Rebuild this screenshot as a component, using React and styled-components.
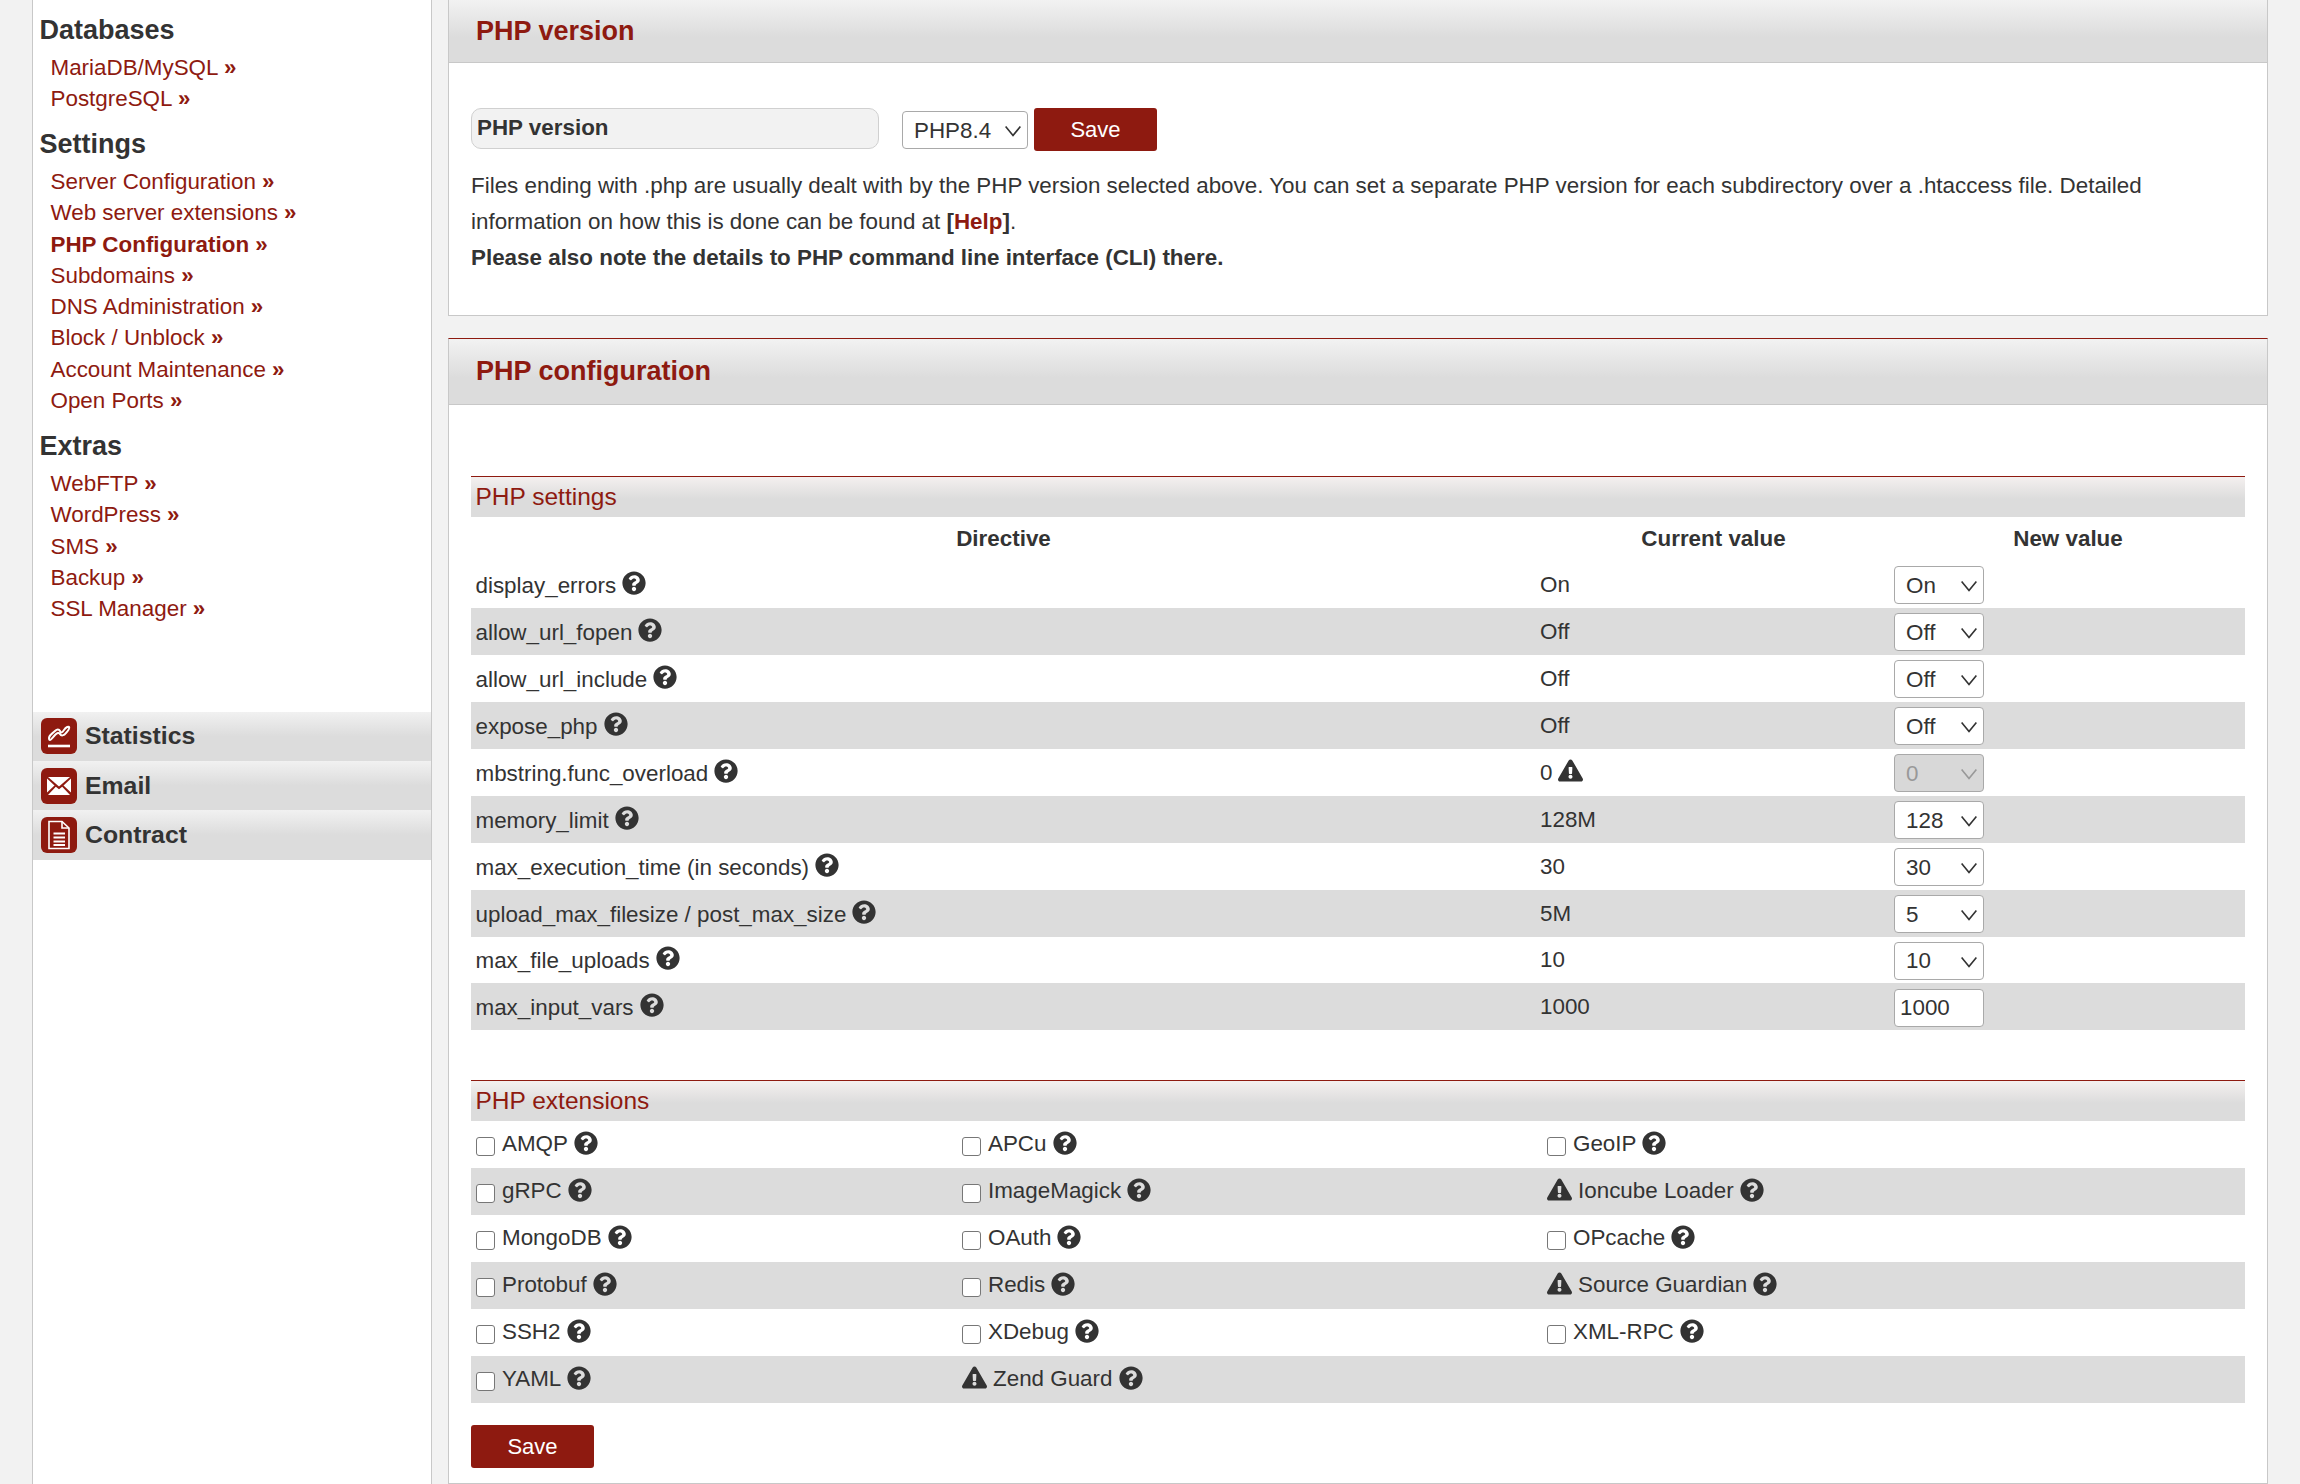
import React from 'react';
import styled, { createGlobalStyle } from 'styled-components';
import { FaQuestionCircle, FaExclamationTriangle } from 'react-icons/fa';

const RED = '#8e1a10';
const INK = '#333333';

const Global = createGlobalStyle`
  html, body { margin: 0; padding: 0; background: #f2f2f2; height: 1484px; overflow: hidden; }
  body { font-family: "Liberation Sans", Arial, sans-serif; color: ${INK}; font-size: 22.4px; }
`;

const Page = styled.div`
  display: flex;
  align-items: stretch;
  height: 1484px;
  padding: 0 32px;
  box-sizing: border-box;
  gap: 16px;
  overflow: hidden;
`;

const Sidebar = styled.aside`
  width: 400px;
  flex: none;
  box-sizing: border-box;
  background: #fff;
  border-left: 1px solid #c8c8c8;
  border-right: 1px solid #c8c8c8;
  padding-top: 12.5px;
`;

const SideGroup = styled.div`
  padding-left: 6.5px;
  margin-bottom: 12.5px;
`;

const SideHeading = styled.h3`
  margin: 0 0 5.2px;
  font-size: 27px;
  line-height: 34px;
  font-weight: bold;
  color: ${INK};
`;

const SideLink = styled.a`
  display: block;
  margin-left: 11px;
  font-size: 22.4px;
  line-height: 31.3px;
  color: ${RED};
  font-weight: ${(p) => (p.$active ? 'bold' : 'normal')};
  b { font-weight: bold; }
`;

const SideNav = styled.div`
  margin-top: 87px;
  display: flex;
  flex-direction: column;
`;

const NavItem = styled.div`
  height: 49.4px;
  display: flex;
  align-items: center;
  gap: 8px;
  padding-left: 8px;
  background: linear-gradient(#f1f1f1 0, #dcdcdc 50%, #dcdcdc 100%);
  font-size: 24.8px;
  font-weight: bold;
  color: ${INK};
`;

const NavIcon = styled.span`
  width: 36px;
  height: 36px;
  flex: none;
  border-radius: 6px;
  background: ${RED};
  display: flex;
  align-items: center;
  justify-content: center;
`;

const Main = styled.main`
  flex: 1;
  min-width: 0;
  display: flex;
  flex-direction: column;
  gap: 22px;
`;

const Panel = styled.section`
  background: #fff;
  border-left: 1px solid #c8c8c8;
  border-right: 1px solid #c8c8c8;
  border-bottom: 1px solid #c8c8c8;
  border-top: ${(p) => (p.$ruled ? `1px solid ${RED}` : 'none')};
  flex: ${(p) => (p.$grow ? '1' : 'none')};
`;

const PanelHeader = styled.header`
  height: ${(p) => p.$h}px;
  box-sizing: border-box;
  display: flex;
  align-items: center;
  padding-left: 27px;
  background: linear-gradient(#f2f2f2 0, #dcdcdc 60%, #dcdcdc 100%);
  border-bottom: 1px solid #c8c8c8;
  font-size: 27px;
  font-weight: bold;
  color: ${RED};
`;

const PanelBody = styled.div`
  padding: ${(p) => p.$pad};
`;

const VersionForm = styled.div`
  display: flex;
  align-items: flex-start;
  margin-bottom: 17px;
`;

const VersionLabel = styled.div`
  width: 408px;
  height: 41px;
  box-sizing: border-box;
  background: #f2f2f2;
  border: 1px solid #d0d0d0;
  border-radius: 10px;
  padding-left: 5px;
  line-height: 38px;
  font-weight: bold;
  margin-right: 23px;
`;

const Button = styled.button`
  width: 123px;
  height: 43px;
  background: ${RED};
  color: #fff;
  border: none;
  border-radius: 3px;
  font: 22px "Liberation Sans", Arial, sans-serif;
  padding: 0;
`;

const VersionSelect = styled.div`
  margin: 3px 6px 0 0;
`;

const SelectWrap = styled.span`
  position: relative;
  display: inline-block;
  width: ${(p) => p.$w}px;
  height: 38px;
  svg { position: absolute; right: 7.5px; top: 14px; pointer-events: none; }
`;

const NativeSelect = styled.select`
  appearance: none;
  width: 100%;
  height: 100%;
  box-sizing: border-box;
  border: 1px solid #a9a9a9;
  border-radius: 4px;
  background: ${(p) => (p.disabled ? '#d8d8d8' : '#fff')};
  color: ${(p) => (p.disabled ? '#999' : INK)};
  opacity: 1;
  font: 22.4px "Liberation Sans", Arial, sans-serif;
  padding: 0 0 0 11px;
  margin: 0;
`;

const Para = styled.p`
  margin: 0;
  line-height: 36px;
  font-size: 22.4px;
  font-weight: ${(p) => (p.$bold ? 'bold' : 'normal')};
  strong { font-weight: bold; }
  a { color: ${RED}; font-weight: bold; }
`;

const Section = styled.div`
  margin-bottom: ${(p) => p.$mb}px;
`;

const SubHeader = styled.h4`
  margin: 0;
  height: 41px;
  box-sizing: border-box;
  border-top: 1px solid ${RED};
  background: linear-gradient(#f4f0ef 0, #dcdcdc 55%, #dcdcdc 100%);
  padding-left: 4.5px;
  font-size: 24.5px;
  line-height: 40px;
  font-weight: normal;
  color: ${RED};
`;

const Grid = styled.div`
  display: grid;
  grid-template-columns: ${(p) => p.$cols};
`;

const HeadCell = styled.div`
  height: 44px;
  line-height: 44px;
  text-align: center;
  font-weight: bold;
  font-size: 22.4px;
`;

const Row = styled.div`
  display: grid;
  grid-template-columns: subgrid;
  grid-column: 1 / -1;
  height: 46.95px;
  align-items: center;
  background: ${(p) => (p.$odd ? '#dcdcdc' : 'transparent')};
`;

const NameCell = styled.div`
  display: flex;
  align-items: center;
  gap: 6px;
  padding: 3px 0 0 4.5px;
`;

const ValueCell = styled.div`
  display: flex;
  align-items: center;
  gap: 6px;
  padding: 1px 0 0 4px;
`;

const NewCell = styled.div`
  padding: 2px 0 0 3px;
  display: flex;
  align-items: center;
`;

const TextInput = styled.input`
  width: 90px;
  height: 38px;
  box-sizing: border-box;
  border: 1px solid #a9a9a9;
  border-radius: 4px;
  background: #fff;
  color: ${INK};
  font: 22.4px "Liberation Sans", Arial, sans-serif;
  padding: 0 0 0 5px;
  margin: 0;
`;

const Help = styled(FaQuestionCircle)`
  width: 24px;
  height: 24px;
  flex: none;
  color: ${INK};
  position: relative;
  top: -2px;
`;

const RowHelp = styled(Help)`
  top: -3px;
`;

const Warn = styled(FaExclamationTriangle)`
  width: 25px;
  height: 23px;
  flex: none;
  color: ${INK};
  position: relative;
  top: -2px;
`;

const ExtCell = styled.label`
  display: flex;
  align-items: center;
  padding-left: 5px;
  gap: 6px;
`;

const ExtName = styled.span`
  position: relative;
  top: -1px;
`;

const Check = styled.input`
  appearance: none;
  width: 19px;
  height: 19px;
  margin: 4px 1px 0 0;
  flex: none;
  box-sizing: border-box;
  border: 1.5px solid #777;
  border-radius: 3px;
  background: #fff;
`;

const Footer = styled.div`
  margin-top: 22px;
`;

const Chevron = ({ muted }) => (
  <svg width="16" height="12" viewBox="0 0 16 12" fill="none" stroke={muted ? '#999' : '#333'} strokeWidth="1.7">
    <path d="M0.6 1.5 L8 10.5 L15.4 1.5" />
  </svg>
);

const Select = ({ w = 90, value, disabled }) => (
  <SelectWrap $w={w}>
    <NativeSelect defaultValue={value} disabled={disabled}>
      <option>{value}</option>
    </NativeSelect>
    <Chevron muted={disabled} />
  </SelectWrap>
);

const StatsIcon = () => (
  <svg width="26" height="28" viewBox="0 0 26 28" fill="none" stroke="#fff">
    <path d="M3 16 C3 13 6 12 9 9 C11 7 13 7 14 9 C15 11 16 11 18 8 C20 5 23 4 23 5 C24 6 22 9 20 11 C18 14 15 14 14 12 C13 10 11 11 9 13 C7 15 5 18 4 18 C3 18 3 17 3 16 Z" strokeWidth="2" />
    <path d="M2 24 H24" strokeWidth="2.6" />
  </svg>
);

const MailIcon = () => (
  <svg width="24" height="18" viewBox="0 0 24 18" fill="#fff">
    <path d="M1 0 H23 L12 9.5 Z" />
    <path d="M0 1.5 L7.5 8.5 L0 15.5 Z" />
    <path d="M24 1.5 L16.5 8.5 L24 15.5 Z" />
    <path d="M1 18 L8.8 9.8 L12 12.3 L15.2 9.8 L23 18 Z" />
  </svg>
);

const DocIcon = () => (
  <svg width="24" height="30" viewBox="0 0 24 30" fill="none" stroke="#fff" strokeWidth="1.6">
    <path d="M2 1.5 H15 L22 8 V28.5 H2 Z" />
    <path d="M15 1.5 V8 H22" />
    <path d="M6.5 13.5 H18 M6.5 17.5 H18 M6.5 21.5 H18 M6.5 25 H18" strokeWidth="1.8" />
  </svg>
);

const sideGroups = [
  { title: 'Databases', links: ['MariaDB/MySQL', 'PostgreSQL'] },
  {
    title: 'Settings',
    links: ['Server Configuration', 'Web server extensions', 'PHP Configuration', 'Subdomains', 'DNS Administration', 'Block / Unblock', 'Account Maintenance', 'Open Ports'],
  },
  { title: 'Extras', links: ['WebFTP', 'WordPress', 'SMS', 'Backup', 'SSL Manager'] },
];

const settings = [
  ['display_errors', 'On', 'On'],
  ['allow_url_fopen', 'Off', 'Off'],
  ['allow_url_include', 'Off', 'Off'],
  ['expose_php', 'Off', 'Off'],
  ['mbstring.func_overload', '0', '0', 'disabled'],
  ['memory_limit', '128M', '128'],
  ['max_execution_time (in seconds)', '30', '30'],
  ['upload_max_filesize / post_max_size', '5M', '5'],
  ['max_file_uploads', '10', '10'],
  ['max_input_vars', '1000', '1000', 'input'],
];

const extensions = [
  ['AMQP', 'APCu', 'GeoIP'],
  ['gRPC', 'ImageMagick', '!Ioncube Loader'],
  ['MongoDB', 'OAuth', 'OPcache'],
  ['Protobuf', 'Redis', '!Source Guardian'],
  ['SSH2', 'XDebug', 'XML-RPC'],
  ['YAML', '!Zend Guard', ''],
];

const Ext = ({ name }) => {
  if (!name) return <div />;
  const warn = name[0] === '!';
  return (
    <ExtCell>
      {warn ? <Warn /> : <Check type="checkbox" />}
      <ExtName>{warn ? name.slice(1) : name}</ExtName>
      <Help />
    </ExtCell>
  );
};

export default function App() {
  return (
    <>
      <Global />
      <Page>
        <Sidebar>
          {sideGroups.map((g) => (
            <SideGroup key={g.title}>
              <SideHeading>{g.title}</SideHeading>
              {g.links.map((l) => (
                <SideLink key={l} $active={l === 'PHP Configuration'}>
                  {l} <b>»</b>
                </SideLink>
              ))}
            </SideGroup>
          ))}
          <SideNav>
            <NavItem><NavIcon><StatsIcon /></NavIcon>Statistics</NavItem>
            <NavItem><NavIcon><MailIcon /></NavIcon>Email</NavItem>
            <NavItem><NavIcon><DocIcon /></NavIcon>Contract</NavItem>
          </SideNav>
        </Sidebar>
        <Main>
          <Panel>
            <PanelHeader $h={63}>PHP version</PanelHeader>
            <PanelBody $pad="45px 22px 39px">
              <VersionForm>
                <VersionLabel>PHP version</VersionLabel>
                <VersionSelect><Select w={126} value="PHP8.4" /></VersionSelect>
                <Button>Save</Button>
              </VersionForm>
              <Para>
                Files ending with .php are usually dealt with by the PHP version selected above. You can set a separate PHP version for each subdirectory over a .htaccess file. Detailed information on how this is done can be found at <strong>[<a>Help</a>]</strong>.
              </Para>
              <Para $bold>Please also note the details to PHP command line interface (CLI) there.</Para>
            </PanelBody>
          </Panel>
          <Panel $ruled $grow>
            <PanelHeader $h={66}>PHP configuration</PanelHeader>
            <PanelBody $pad="71px 22px 0">
              <Section $mb={50}>
                <SubHeader>PHP settings</SubHeader>
                <Grid $cols="1065px 355px 354px">
                  <HeadCell>Directive</HeadCell>
                  <HeadCell>Current value</HeadCell>
                  <HeadCell>New value</HeadCell>
                  {settings.map(([name, cur, val, kind], i) => (
                    <Row key={name} $odd={i % 2 === 1}>
                      <NameCell>{name} <RowHelp /></NameCell>
                      <ValueCell>{cur}{kind === 'disabled' && <Warn />}</ValueCell>
                      <NewCell>
                        {kind === 'input' ? <TextInput defaultValue={val} /> : <Select value={val} disabled={kind === 'disabled'} />}
                      </NewCell>
                    </Row>
                  ))}
                </Grid>
              </Section>
              <Section $mb={0}>
                <SubHeader>PHP extensions</SubHeader>
                <Grid $cols="486px 585px 703px">
                  {extensions.map((r, i) => (
                    <Row key={r[0]} $odd={i % 2 === 1}>
                      {r.map((n, j) => <Ext key={j} name={n} />)}
                    </Row>
                  ))}
                </Grid>
              </Section>
              <Footer><Button>Save</Button></Footer>
            </PanelBody>
          </Panel>
        </Main>
      </Page>
    </>
  );
}
